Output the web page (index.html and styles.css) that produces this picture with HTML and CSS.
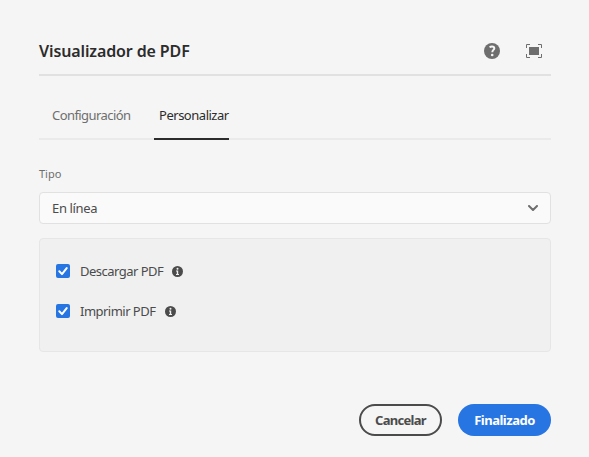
FILE: index.html
```html
<!DOCTYPE html>
<html lang="es">
<head>
<meta charset="utf-8">
<title>Visualizador de PDF</title>
<link rel="stylesheet" href="styles.css">
</head>
<body>
<main class="dialog">
  <header class="header">
    <h1 class="title">Visualizador de PDF</h1>
    <div class="actions">
      <svg class="icon" viewBox="0 0 16 16"><circle cx="8" cy="8" r="8" fill="#6e6e6e"/><path d="M5.600 4.400C6.300 3.700 7.100 3.400 8 3.400c1.500 0 2.300.8 2.300 1.900 0 1.600-2 1.700-2 3.900" fill="none" stroke="#f5f5f5" stroke-width="2"/><circle cx="8.200" cy="12" r="1.300" fill="#f5f5f5"/></svg>
      <svg class="icon" viewBox="0 0 16 16"><path d="M3 4h10v8H3z" fill="#6e6e6e"/><path d="M.5 5V1.500H4M12 1.500h3.500V5M15.500 11v3.500H12M4 14.500H.5V11" fill="none" stroke="#6e6e6e"/></svg>
    </div>
  </header>
  <nav class="tabs">
    <span class="tab config">Configuración</span>
    <span class="tab active">Personalizar</span>
  </nav>
  <div class="label">Tipo</div>
  <div class="select">
    <span class="value">En línea</span>
    <svg class="chevron" viewBox="0 0 10 6"><path d="M1 1l4 4 4-4" fill="none" stroke="#6e6e6e" stroke-width="2" stroke-linecap="round" stroke-linejoin="round"/></svg>
  </div>
  <section class="panel">
    <div class="option">
      <span class="check"><svg viewBox="0 0 14 14"><path d="M3.300 7.300l2.700 2.800 4.700-6" fill="none" stroke="#fff" stroke-width="2" stroke-linecap="round" stroke-linejoin="round"/></svg></span>
      <span class="text download">Descargar PDF</span>
      <svg class="info" viewBox="0 0 11 11"><circle cx="5.500" cy="5.500" r="5.500" fill="#4b4b4b"/><circle cx="5.500" cy="2.700" r="1" fill="#f0f0f0"/><path d="M4 4.500h2.200V8H7v1H4V8h.8V5.500H4z" fill="#f0f0f0"/></svg>
    </div>
    <div class="option">
      <span class="check"><svg viewBox="0 0 14 14"><path d="M3.300 7.300l2.700 2.800 4.700-6" fill="none" stroke="#fff" stroke-width="2" stroke-linecap="round" stroke-linejoin="round"/></svg></span>
      <span class="text print">Imprimir PDF</span>
      <svg class="info" viewBox="0 0 11 11"><circle cx="5.500" cy="5.500" r="5.500" fill="#4b4b4b"/><circle cx="5.500" cy="2.700" r="1" fill="#f0f0f0"/><path d="M4 4.500h2.200V8H7v1H4V8h.8V5.500H4z" fill="#f0f0f0"/></svg>
    </div>
  </section>
  <footer class="footer">
    <button class="button cancel">Cancelar</button>
    <button class="button done">Finalizado</button>
  </footer>
</main>
</body>
</html>
```
FILE: styles.css
```css
* { box-sizing: border-box; }
body {
  margin: 0;
  background: #f5f5f5;
  font-family: "Noto Sans", sans-serif;
  font-size: 13px;
  color: #4b4b4b;
}
svg { display: block; flex: none; }
.dialog {
  width: 589px;
  height: 457px;
  padding: 28px 38px 0 39px;
  white-space: nowrap;
}
.header {
  display: flex;
  justify-content: space-between;
  height: 48px;
  border-bottom: 2px solid #e1e1e1;
  padding-right: 9px;
}
.title {
  margin: 0;
  font-size: 16px;
  line-height: 46px;
  font-weight: 600;
  letter-spacing: -0.12px;
  color: #2c2c2c;
}
.actions { display: flex; gap: 26px; padding-top: 15px; }
.icon { width: 16px; height: 16px; }
.tabs {
  display: flex;
  height: 64px;
  padding-left: 13px;
  border-bottom: 2px solid #eaeaea;
}
.tab { height: 64px; padding-top: 29px; line-height: 20px; color: #6e6e6e; }
.config { width: 102px; letter-spacing: -0.57px; }
.active {
  width: 75px;
  padding-left: 5px;
  letter-spacing: -0.48px;
  color: #2c2c2c;
  border-bottom: 2px solid #2c2c2c;
}
.label { margin-top: 25px; height: 27px; font-size: 11px; line-height: 18px; color: #6e6e6e; }
.select {
  display: flex;
  align-items: center;
  justify-content: space-between;
  height: 32px;
  padding: 0 12px;
  background: #fafafa;
  border: 1px solid #e1e1e1;
  border-radius: 4px;
}
.value { letter-spacing: -0.35px; }
.chevron { width: 10px; height: 6px; }
.panel {
  height: 114px;
  margin-top: 14px;
  padding: 12px 16px;
  background: #f0f0f0;
  border: 1px solid #e6e6e6;
  border-radius: 4px;
}
.option { display: flex; align-items: center; height: 40px; }
.check { width: 14px; height: 14px; margin-right: 10px; background: #2675e3; border-radius: 2px; }
.text { letter-spacing: -0.52px; }
.download { width: 91.500px; }
.print { width: 84.500px; }
.info { width: 11px; height: 11px; }
.footer { display: flex; justify-content: flex-end; gap: 16px; margin-top: 52px; }
.button {
  height: 32px;
  padding: 0;
  border: 0;
  border-radius: 16px;
  font: 700 13px/28px "Noto Sans", sans-serif;
  letter-spacing: -0.5px;
}
.cancel { width: 83px; border: 2px solid #4b4b4b; background: transparent; color: #4b4b4b; letter-spacing: -0.700px; }
.done { width: 93px; background: #2675e3; color: #fff; }
```
